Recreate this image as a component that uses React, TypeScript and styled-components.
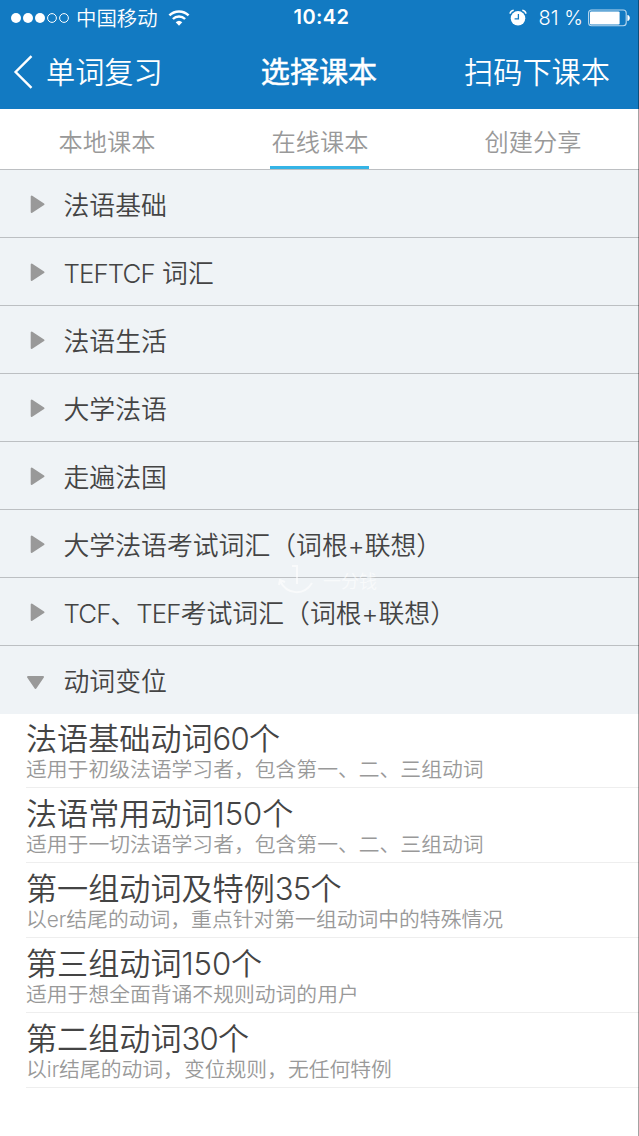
import React from "react";
import styled, { createGlobalStyle } from "styled-components";

const GlobalStyle = createGlobalStyle`
  *, *::before, *::after { box-sizing: border-box; }
  body {
    margin: 0;
    background: #fff;
    font-family: Inter, "Noto Sans CJK SC", sans-serif;
    font-weight: 350;
    color: #444;
  }
`;

const Screen = styled.div`
  position: relative;
  width: 639px;
  height: 1136px;
  overflow: hidden;
  background: #fff;
`;

const EdgeLine = styled.div`
  position: absolute;
  top: 0;
  right: 0;
  bottom: 0;
  width: 1px;
  background: rgba(0, 0, 0, 0.36);
`;

const Header = styled.header`
  height: 109px;
  background: #127ac2;
  color: #fff;
`;

const StatusBar = styled.div`
  display: grid;
  grid-template-columns: 1fr auto 1fr;
  align-items: center;
  height: 35px;
  padding: 0 9px 0 10px;
  font-size: 20.4px;
  line-height: 35px;
`;

const Carrier = styled.div`
  display: flex;
  align-items: center;
  height: 34px;
  svg { flex: none; }
  span { margin: 0 10px 0 6px; padding-top: 1px; }
`;

const Clock = styled.div`
  font-size: 20px;
  font-weight: 600;
  letter-spacing: 0.4px;
  padding-left: 3px;
`;

const Power = styled.div`
  display: flex;
  align-items: center;
  justify-content: flex-end;
  height: 34px;
  font-size: 20px;
  span { margin: 0 5px 0 12px; padding-top: 1px; }
`;

const NavBar = styled.nav`
  display: grid;
  grid-template-columns: 1fr auto 1fr;
  align-items: center;
  height: 74px;
  padding: 0 29px 0 13px;
  font-size: 29.2px;
  line-height: 74px;
`;

const BackButton = styled.div`
  display: flex;
  align-items: center;
  gap: 12px;
  span { padding-top: 2px; line-height: 72px; }
`;

const NavTitle = styled.h1`
  margin: 0;
  padding: 2px 0 0 15px;
  font-size: 29.1px;
  font-weight: 400;
  line-height: 72px;
  -webkit-text-stroke: 0.5px currentColor;
`;

const NavAction = styled.div`
  padding-top: 2px;
  line-height: 72px;
  text-align: right;
`;

const Tabs = styled.div`
  display: grid;
  grid-template-columns: repeat(3, 213px);
  justify-items: center;
  height: 60px;
`;

const Tab = styled.div<{ $active?: boolean }>`
  height: 60px;
  padding: 0 0.5px 0 1.5px;
  border-bottom: 3px solid ${(p) => (p.$active ? "#35b4e6" : "transparent")};
  color: #999;
  font-size: 24.2px;
  line-height: 68px;
`;

const GroupRow = styled.div`
  display: flex;
  align-items: center;
  height: 68.07px;
  padding-left: 26px;
  border-top: 1px solid #bcbfc2;
  background: #eff3f6;
  font-size: 25.85px;
  white-space: nowrap;
`;

const GroupName = styled.span`
  padding-top: 4px;
  line-height: 63px;
`;

const Latin = styled.span<{ $tracking: number }>`
  letter-spacing: ${(p) => p.$tracking}px;
`;

const ArrowBox = styled.span`
  display: flex;
  width: 37.5px;
`;

const BookRow = styled.div`
  display: flex;
  flex-direction: column;
  height: 74.9px;
  margin-left: 26px;
  padding-top: 7.5px;
  border-bottom: 1px solid #eee;
  white-space: nowrap;
`;

const BookTitle = styled.div`
  font-size: 31.1px;
  line-height: 36px;
`;

const BookNote = styled.div`
  color: #999;
  font-size: 20.8px;
  line-height: 26px;
`;

const Watermark = styled.div`
  position: absolute;
  left: 277px;
  top: 563px;
  display: flex;
  gap: 8px;
  color: rgba(255, 255, 255, 0.6);
  font-size: 18px;
  line-height: 38px;
`;

const Signal = () => (
  <svg width="60" height="12" viewBox="0 0 60 12">
    {[6, 18, 30].map((x) => <circle key={x} cx={x} cy="6" r="5" fill="#fff" />)}
    {[42, 54].map((x) => (
      <circle key={x} cx={x} cy="6" r="4.4" fill="none" stroke="#fff" strokeWidth="1" />
    ))}
  </svg>
);

const Wifi = () => (
  <svg width="22" height="16" viewBox="0 0 22 16" fill="none" stroke="#fff">
    <path d="M1.4 5.4a13.6 13.6 0 0 1 19.2 0" strokeWidth="2.5" />
    <path d="M4.9 9a8.6 8.6 0 0 1 12.2 0" strokeWidth="2.4" />
    <path d="M11 15.7 7.7 12.2a4.8 4.8 0 0 1 6.6 0Z" fill="#fff" stroke="none" />
  </svg>
);

const Alarm = () => (
  <svg width="18" height="18" viewBox="0 0 18 18" fill="none">
    <circle cx="9" cy="9.3" r="7.3" fill="#fff" />
    <path d="M9.4 5v4.8H5.6" stroke="#127ac2" strokeWidth="1.3" />
    <path d="M1 4.6A4.4 4.4 0 0 1 4.7 1.2M17 4.6a4.4 4.4 0 0 0-3.7-3.4" stroke="#fff" strokeWidth="1.6" />
  </svg>
);

const Battery = () => (
  <svg width="42" height="18" viewBox="0 0 42 18">
    <rect x="0.6" y="1" width="37.6" height="15.8" rx="3" fill="none" stroke="#b9d8ee" strokeWidth="1.1" />
    <rect x="2" y="2.4" width="29.6" height="13" rx="1.2" fill="#fff" />
    <path d="M39.4 6c3.2.4 3.2 5.6 0 6Z" fill="#fff" />
  </svg>
);

const Chevron = () => (
  <svg width="21" height="34" viewBox="0 0 21 34" fill="none">
    <path d="M18.5 1.2 2.6 17l15.9 15.8" stroke="#fff" strokeWidth="2.4" />
  </svg>
);

const Arrow = ({ open }: { open?: boolean }) => (
  <svg width="24" height="22" viewBox="0 0 24 22">
    <path
      d={open ? "M2 8h15L9.5 19Z" : "M5.7 3.5v15.5l11.8-7.75Z"}
      fill="#999"
      stroke="#999"
      strokeWidth="2"
      strokeLinejoin="round"
    />
  </svg>
);

/** Adjusts the tracking of the Latin letters or digits inside a Chinese label. */
const Label = ({ text, tracking }: { text: string; tracking: number }) => (
  <>
    {text.split(/([A-Za-z0-9]+)/).map((part, i) =>
      i % 2 ? (
        <Latin key={i} $tracking={tracking}>
          {part}
        </Latin>
      ) : (
        part
      )
    )}
  </>
);

const groups = [
  "法语基础",
  "TEFTCF 词汇",
  "法语生活",
  "大学法语",
  "走遍法国",
  "大学法语考试词汇（词根+联想）",
  "TCF、TEF考试词汇（词根+联想）",
  "动词变位",
];

const books = [
  { title: "法语基础动词60个", note: "适用于初级法语学习者，包含第一、二、三组动词", tracking: -0.8 },
  { title: "法语常用动词150个", note: "适用于一切法语学习者，包含第一、二、三组动词", tracking: -0.1 },
  { title: "第一组动词及特例35个", note: "以er结尾的动词，重点针对第一组动词中的特殊情况", tracking: -0.8 },
  { title: "第三组动词150个", note: "适用于想全面背诵不规则动词的用户", tracking: -0.1 },
  { title: "第二组动词30个", note: "以ir结尾的动词，变位规则，无任何特例", tracking: -0.8 },
];

export default function App() {
  return (
    <Screen>
      <GlobalStyle />
      <Header>
        <StatusBar>
          <Carrier>
            <Signal />
            <span>中国移动</span>
            <Wifi />
          </Carrier>
          <Clock>10:42</Clock>
          <Power>
            <Alarm />
            <span>81 %</span>
            <Battery />
          </Power>
        </StatusBar>
        <NavBar>
          <BackButton>
            <Chevron />
            <span>单词复习</span>
          </BackButton>
          <NavTitle>选择课本</NavTitle>
          <NavAction>扫码下课本</NavAction>
        </NavBar>
      </Header>
      <Tabs>
        <Tab>本地课本</Tab>
        <Tab $active>在线课本</Tab>
        <Tab>创建分享</Tab>
      </Tabs>
      {groups.map((name, i) => (
        <GroupRow key={name}>
          <ArrowBox>
            <Arrow open={i === groups.length - 1} />
          </ArrowBox>
          <GroupName>
            <Label text={name} tracking={-0.9} />
          </GroupName>
        </GroupRow>
      ))}
      {books.map(({ title, note, tracking }) => (
        <BookRow key={title}>
          <BookTitle>
            <Label text={title} tracking={tracking} />
          </BookTitle>
          <BookNote>{note}</BookNote>
        </BookRow>
      ))}
      <Watermark>
        <svg width="38" height="32" viewBox="0 0 38 32" fill="none" stroke="currentColor" strokeWidth="2">
          <path d="M15 3h5v18M3 18c7 14 24 15 32 2M2 22l1-5 5 2" />
        </svg>
        一分钱
      </Watermark>
      <EdgeLine />
    </Screen>
  );
}
